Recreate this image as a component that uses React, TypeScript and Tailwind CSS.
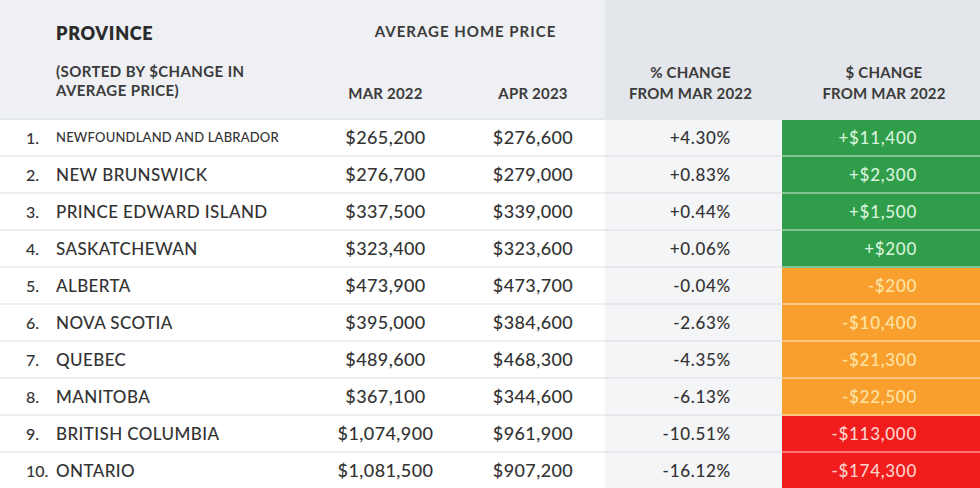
import React from "react";

type Row = {
  name: string;
  mar: string;
  apr: string;
  pct: string;
  change: string;
  tone: "green" | "orange" | "red";
  small?: boolean;
};

const rows: Row[] = [
  { name: "NEWFOUNDLAND AND LABRADOR", mar: "$265,200", apr: "$276,600", pct: "+4.30%", change: "+$11,400", tone: "green", small: true },
  { name: "NEW BRUNSWICK", mar: "$276,700", apr: "$279,000", pct: "+0.83%", change: "+$2,300", tone: "green" },
  { name: "PRINCE EDWARD ISLAND", mar: "$337,500", apr: "$339,000", pct: "+0.44%", change: "+$1,500", tone: "green" },
  { name: "SASKATCHEWAN", mar: "$323,400", apr: "$323,600", pct: "+0.06%", change: "+$200", tone: "green" },
  { name: "ALBERTA", mar: "$473,900", apr: "$473,700", pct: "-0.04%", change: "-$200", tone: "orange" },
  { name: "NOVA SCOTIA", mar: "$395,000", apr: "$384,600", pct: "-2.63%", change: "-$10,400", tone: "orange" },
  { name: "QUEBEC", mar: "$489,600", apr: "$468,300", pct: "-4.35%", change: "-$21,300", tone: "orange" },
  { name: "MANITOBA", mar: "$367,100", apr: "$344,600", pct: "-6.13%", change: "-$22,500", tone: "orange" },
  { name: "BRITISH COLUMBIA", mar: "$1,074,900", apr: "$961,900", pct: "-10.51%", change: "-$113,000", tone: "red" },
  { name: "ONTARIO", mar: "$1,081,500", apr: "$907,200", pct: "-16.12%", change: "-$174,300", tone: "red" },
];

const toneClass = {
  green: "bg-[#2f9d4a] text-[#d9f3dc]",
  orange: "bg-[#f99f2e] text-[#fde4a6]",
  red: "bg-[#f11c1c] text-[#ffd2cc]",
};

export default function App() {
  return (
    <div className="w-[980px] h-[488px] overflow-hidden bg-white text-[#333] font-['Lato',sans-serif]">
      {/* Header */}
      <div className="grid grid-cols-[320px_135px_150px_177px_198px] h-[120px] border-b-2 border-[#e3e6ea]">
        <div className="bg-[#eef0f3] pl-[56px] pt-[20px]">
          <div className="text-[18px] font-extrabold tracking-[0.7px] text-[#2b2b2b]">PROVINCE</div>
          <div className="mt-[15px] text-[15px] font-bold leading-[19px] tracking-[0.4px] text-[#3b3b3b]">
            (SORTED BY $CHANGE IN
            <br />
            AVERAGE PRICE)
          </div>
        </div>
        <div className="col-span-2 bg-[#eef0f3] relative">
          <div className="absolute top-[20px] left-0 right-[-6px] text-center text-[15px] font-bold tracking-[1px] text-[#3b3b3b]">
            AVERAGE HOME PRICE
          </div>
          <div className="grid grid-cols-[135px_150px] h-full items-end pb-[14px] text-[15px] font-bold tracking-[0.2px] text-[#3b3b3b]">
            <div className="text-center pr-[4px]">MAR 2022</div>
            <div className="text-center pl-[6px]">APR 2023</div>
          </div>
        </div>
        <div className="bg-[#e3e6ea] flex items-end justify-center pb-[14px] pr-[6px] text-[15px] font-bold leading-[21px] tracking-[0.2px] text-[#3b3b3b] text-center">
          % CHANGE
          <br />
          FROM MAR 2022
        </div>
        <div className="bg-[#e3e6ea] flex items-end justify-center pb-[14px] pl-[6px] text-[15px] font-bold leading-[21px] tracking-[0.2px] text-[#3b3b3b] text-center">
          $ CHANGE
          <br />
          FROM MAR 2022
        </div>
      </div>

      {/* Rows */}
      {rows.map((r, i) => (
        <div key={r.name} className="grid grid-cols-[320px_135px_150px_177px_198px] h-[37px] text-[17px] font-medium">
          <div className="flex items-center pl-[26px] border-b-2 border-[#eceef1]">
            <span className="w-[30px] text-[16px]">{i + 1}.</span>
            <span className={r.small ? "text-[13px] tracking-[0.2px]" : "text-[17px] tracking-[0.4px]"}>{r.name}</span>
          </div>
          <div className="flex items-center justify-center pr-[4px] text-[18px] tracking-[0.4px] border-b-2 border-[#eceef1]">{r.mar}</div>
          <div className="flex items-center justify-center pl-[6px] text-[18px] tracking-[0.4px] border-b-2 border-[#eceef1]">{r.apr}</div>
          <div className="flex items-center justify-end pr-[51px] tracking-[0.7px] bg-[#f4f5f7] border-b-2 border-[#e6e8eb]">{r.pct}</div>
          <div className={`flex items-center justify-end pr-[63px] tracking-[0.7px] border-b-2 border-white/40 ${toneClass[r.tone]}`}>
            {r.change}
          </div>
        </div>
      ))}
    </div>
  );
}
